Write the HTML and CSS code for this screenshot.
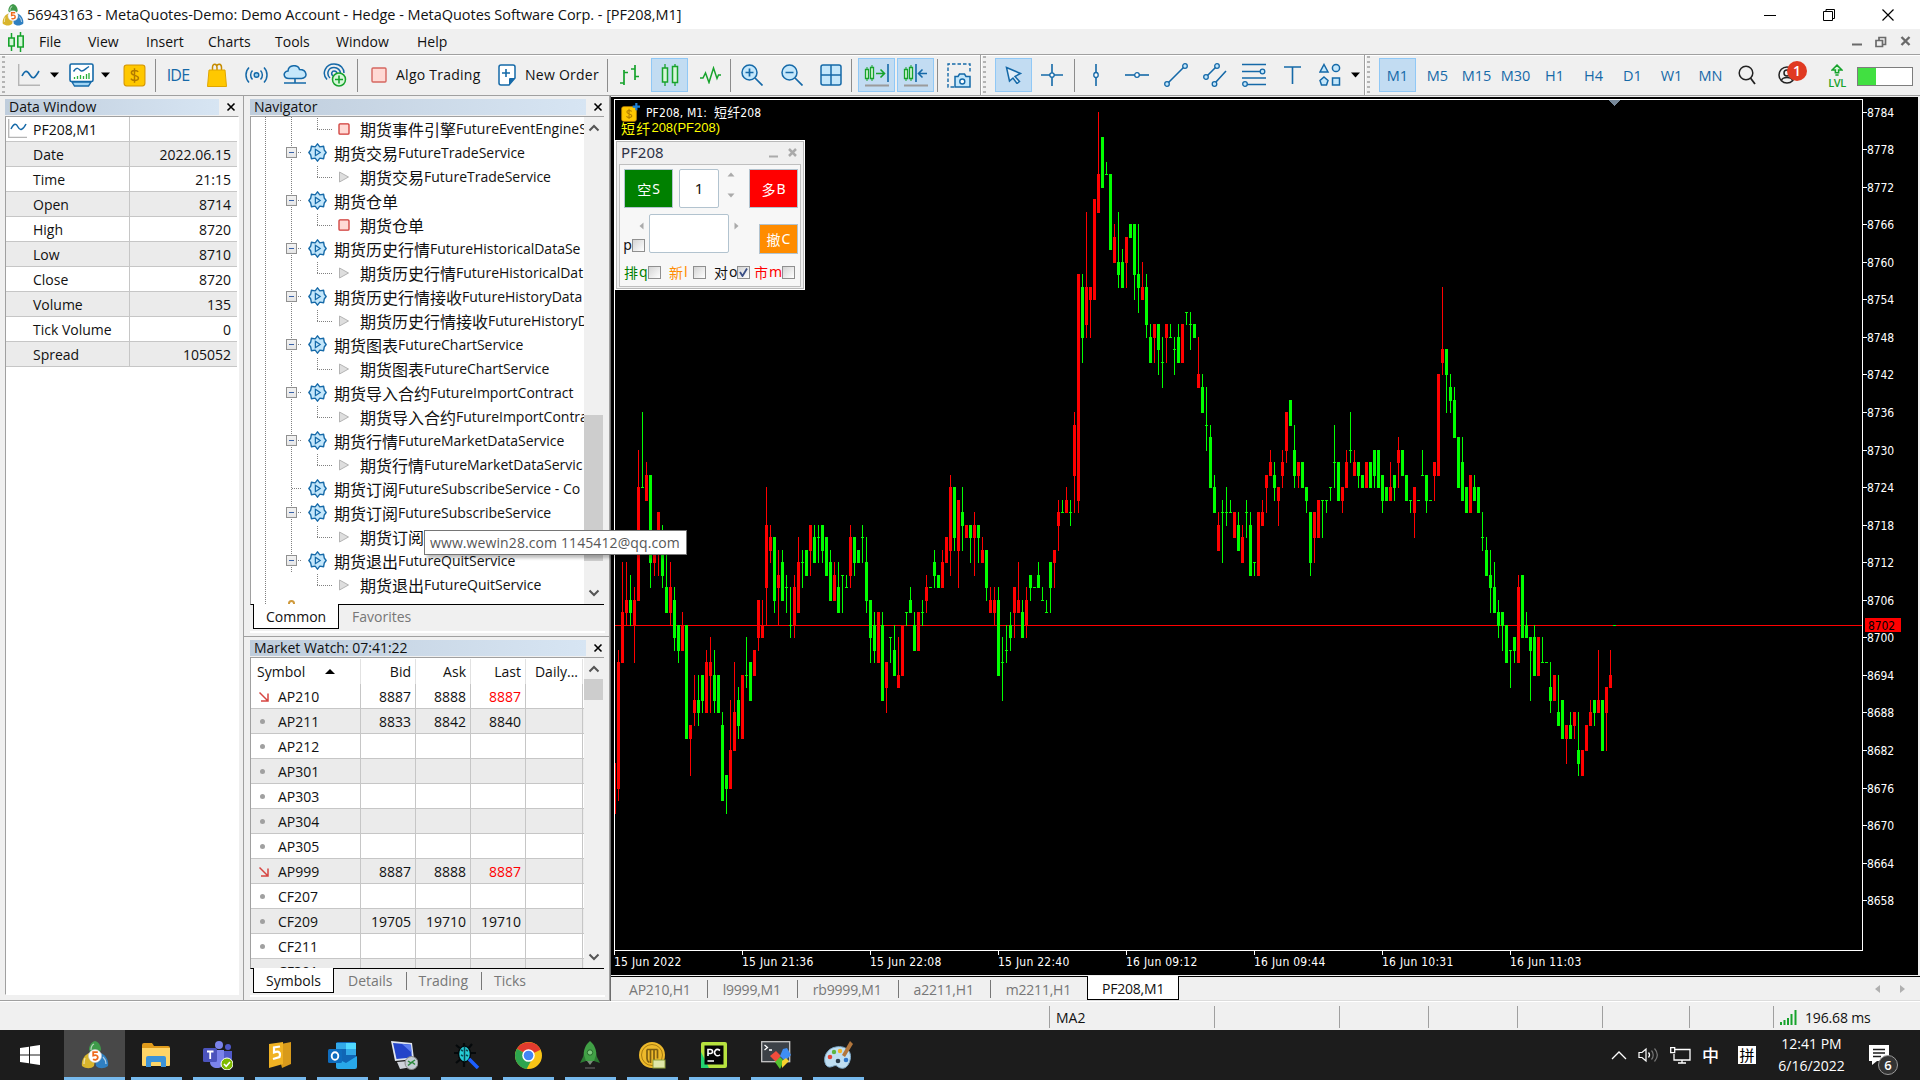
FILE: index.html
```html
<!DOCTYPE html>
<html lang="en">
<head>
    <meta charset="UTF-8">
    <meta name="viewport" content="width=device-width, initial-scale=1.0">
    <title>56943163 - MetaQuotes-Demo: Demo Account - Hedge</title>
    <link rel="stylesheet" href="styles.css">
</head>
<body>

    <!-- shared icons -->
    <svg width="0" height="0" class="defs">
        <symbol id="mt5" viewBox="0 0 28 28">
            <path d="M14 0c-4 1-6 5-6 9l3 4h6l3-4c0-4-2-8-6-9z" fill="#3f9a4a"/>
            <path d="M8 12c-5 2-8 8-7 13 4 3 9 3 12 0l1-7z" fill="#d9b52c"/>
            <path d="M20 12c5 2 8 8 7 13-4 3-9 3-12 0l-1-7z" fill="#2f7fc1"/>
            <path d="M13 3c-2 1-3 4-3 6M4 17c-1 2-1 4-1 6M22 16c2 2 3 5 3 7" stroke="#fff" stroke-opacity=".6" stroke-width="1.3" fill="none"/>
            <circle cx="14" cy="15" r="6.5" fill="#fff" stroke="#c9c9c9" stroke-width=".6"/>
            <path d="M16.800 11.200h-4.600v3.400c3-1 4.800 0 4.600 2.100s-2.800 2.600-4.800 1.500" stroke="#ee6a1c" stroke-width="1.800" fill="none"/>
        </symbol>
        <symbol id="gear" viewBox="0 0 18 18">
            <path d="M9 .8l2.200 2.900 3.600-.6.600 3.500L17.200 9l-1.800 2.400-.600 3.500-3.600-.6L9 17.200l-2.200-2.900-3.600.6-.6-3.500L.8 9l1.800-2.400.6-3.500 3.600.6z" fill="#c4e7fb" stroke="#1569a8" stroke-width="1.300" stroke-linejoin="round"/>
            <path d="M7 6l4.500 3L7 12z" fill="none" stroke="#1569a8" stroke-width="1.200"/>
        </symbol>
        <symbol id="play" viewBox="0 0 12 12"><path d="M1.500 1L10.500 6l-9 5z" fill="#dedede" stroke="#b4b4b4"/></symbol>
        <symbol id="stopped" viewBox="0 0 12 12"><rect x="1" y=".8" width="10" height="10.400" rx="1" fill="#ffd9d4" stroke="#cf3a36" stroke-width="1.300"/></symbol>
        <symbol id="down" viewBox="0 0 12 12"><path d="M1.500 1.500l8 8M10 2.500V10H3" fill="none" stroke="#d64541" stroke-width="1.500"/></symbol>
        <symbol id="close" viewBox="0 0 10 10"><path d="M1.500 1.500l7 7M8.500 1.500l-7 7" stroke="#000" stroke-width="1.600"/></symbol>
        <symbol id="chev" viewBox="0 0 12 8"><path d="M1.500 6.500L6 2l4.500 4.500" fill="none" stroke="#555" stroke-width="2"/></symbol>
        <symbol id="caret" viewBox="0 0 9 6"><path d="M0 0.500h9L4.500 5.500z"/></symbol>
        <symbol id="coin" viewBox="0 0 22 22">
            <rect x="1" y="1" width="20" height="20" rx="2.500" fill="#ffc800" stroke="#d39400"/>
            <path d="M14.500 7.500c-1-1.700-6.500-2-6.500.9 0 3.200 6.800 1.800 6.800 5.100 0 3-6 2.800-7.300.5M11 4v14" fill="none" stroke="#b17a00" stroke-width="1.400"/>
        </symbol>
    </svg>

    <div class="titlebar">
        <svg class="app-icon" width="22" height="22"><use href="#mt5"/></svg>
        <span class="title">56943163 - MetaQuotes-Demo: Demo Account - Hedge - MetaQuotes Software Corp. - [PF208,M1]</span>
        <div class="win-buttons">
            <svg width="12" height="12" viewBox="0 0 12 12"><path d="M0 6.500h12" stroke="#000"/></svg>
            <svg width="12" height="12" viewBox="0 0 12 12"><path d="M.5 2.500h9v9h-9zM3 2.500v-2h8.500v9H9.500" fill="none" stroke="#000"/></svg>
            <svg width="12" height="12" viewBox="0 0 12 12"><path d="M.5.5l11 11M11.500.5l-11 11" stroke="#000" stroke-width="1.200"/></svg>
        </div>
    </div>

    <div class="menubar">
        <svg class="menu-icon" width="18" height="20" viewBox="0 0 18 20"><path d="M4.500 1v18M13.500 0v20" stroke="#17a32c" stroke-width="1.500"/><path d="M1.800 6h5.400v8H1.800zM10.800 4h5.400v11h-5.400z" fill="#d6f7d9" stroke="#17a32c" stroke-width="1.600"/></svg>
        <span class="m-file">File</span>
        <span class="m-view">View</span>
        <span class="m-insert">Insert</span>
        <span class="m-charts">Charts</span>
        <span class="m-tools">Tools</span>
        <span class="m-window">Window</span>
        <span>Help</span>
        <div class="mdi-buttons">
            <svg width="10" height="10" viewBox="0 0 10 10"><path d="M0 8.500h10" stroke="#6a6a6a" stroke-width="2"/></svg>
            <svg width="12" height="12" viewBox="0 0 12 12"><path d="M1 4.500h6.500v6H1zM4 4V1.500h6.500v7H8" fill="none" stroke="#6a6a6a" stroke-width="1.700"/></svg>
            <svg width="11" height="10" viewBox="0 0 11 10"><path d="M1.500 1l8 8M9.500 1l-8 8" stroke="#6a6a6a" stroke-width="2.400"/></svg>
        </div>
    </div>

    <div class="toolbar">
        <div class="grip first"></div>
        <div class="tool w34"><svg width="22" height="22" viewBox="0 0 22 22"><path d="M.7 0v21.300H22" fill="none" stroke="#b5b5b5" stroke-width="1.400"/><path d="M4 12c3-6 5-6 8-1s5 3 9-4" fill="none" stroke="#1569a8" stroke-width="1.600"/></svg></div>
        <div class="tool w16"><svg width="9" height="6"><use href="#caret"/></svg></div>
        <div class="tool w38"><svg width="25" height="24" viewBox="0 0 25 24"><rect x="1" y="1" width="23" height="17.500" rx="1.500" fill="#fff" stroke="#1569a8" stroke-width="1.600"/><path d="M3 19l2.500 4h14L22 19z" fill="#9fd4f4" stroke="#1569a8" stroke-width="1.400"/><path d="M4.500 8.500c3-5 5-3 7-1s4-1 8.500-4" fill="none" stroke="#1569a8" stroke-width="1.500"/><path d="M5.500 16v-2M8.500 16v-3M11.500 16v-4M14.500 16v-3M17.500 16v-5M20 16v-6" stroke="#28b23b" stroke-width="1.300"/></svg></div>
        <div class="tool w16 pull"><svg width="9" height="6"><use href="#caret"/></svg></div>
        <div class="tool w42"><svg width="23" height="23"><use href="#coin"/></svg></div>
        <div class="sep"></div>
        <div class="tool w44 ide">IDE</div>
        <div class="tool w34"><svg width="20" height="24" viewBox="0 0 20 24"><path d="M5.500 9V4.500c0-4.500 4.500-4 4.500 0V9M9.500 4c1-4 5-3.500 5 .5V9" fill="none" stroke="#c58b00" stroke-width="1.500"/><path d="M2 7h16l1.500 16.500H.5z" fill="#ffc800" stroke="#e0a500"/></svg></div>
        <div class="tool w44"><svg width="23" height="18" viewBox="0 0 23 18"><circle cx="11.500" cy="9" r="2.300" fill="#9fd4f4" stroke="#1569a8" stroke-width="1.400"/><path d="M7.500 4.500c-2.500 2.500-2.500 6.500 0 9M15.500 4.500c2.500 2.500 2.500 6.500 0 9M4 1.500c-4 4-4 11 0 15M19 1.500c4 4 4 11 0 15" fill="none" stroke="#1569a8" stroke-width="1.500"/></svg></div>
        <div class="tool w34"><svg width="24" height="20" viewBox="0 0 24 20"><path d="M6 13.500c-6 0-6.500-7-1-7.500C5.500-.5 15-1 16.500 4.500c8 0 8.500 9 2 9z" fill="#c4e7fb" stroke="#1569a8" stroke-width="1.500"/><path d="M12 13.500V18M1 18h22" stroke="#1569a8" stroke-width="1.600"/></svg></div>
        <div class="tool w45"><svg width="24" height="24" viewBox="0 0 24 24"><path d="M4 16.500C-2 10 3 1 11 1c7 0 10 5 10 9M7 15c-4-4-2-10.500 4-10.500 4 0 6.500 3 6.500 6M10 13c-2.500-2-1-5 1-5s3 1 3 3" fill="none" stroke="#1569a8" stroke-width="1.500"/><circle cx="16" cy="16.500" r="6.500" fill="#d6f7d9" stroke="#17a32c" stroke-width="1.500"/><path d="M16 12.500v8M12 16.500h8" stroke="#17a32c" stroke-width="1.600"/></svg></div>
        <div class="sep"></div>
        <div class="tool w42"><svg width="16" height="16" viewBox="0 0 16 16"><rect x="1" y="1" width="14" height="14" rx="1" fill="#ffd9d4" stroke="#d5655f" stroke-width="1.400"/></svg></div>
        <div class="tool-text algo">Algo Trading</div>
        <div class="tool w38 order"><svg width="18" height="22" viewBox="0 0 18 22"><path d="M3 1h12q2 0 2 2v11l-6 7H3q-2 0-2-2V3q0-2 2-2z" fill="#fff" stroke="#1569a8" stroke-width="1.500"/><path d="M11 21v-6q0-1 1-1h5z" fill="#1569a8"/><path d="M8 5v8M4 9h8" stroke="#1569a8" stroke-width="1.600"/></svg></div>
        <div class="tool-text neworder">New Order</div>
        <div class="sep"></div>
        <div class="tool w43"><svg width="22" height="20" viewBox="0 0 22 20"><path d="M5 5v15M1 18h4M5 7.500h4M16 0v15M12 4h4M16 11.500h4" fill="none" stroke="#17a32c" stroke-width="1.700"/></svg></div>
        <div class="tool on"><svg width="18" height="22" viewBox="0 0 18 22"><path d="M4 0v22M14 0v22" stroke="#17a32c" stroke-width="1.300"/><path d="M1.500 4h5v14h-5zM11.500 2.500h5v16h-5z" fill="#d6f7d9" stroke="#17a32c" stroke-width="1.500"/></svg></div>
        <div class="tool w40"><svg width="22" height="18" viewBox="0 0 22 18"><path d="M1 12h3l2.500-5 3.500 9.500L14.500 2 18 12.500 19.500 9H22" fill="none" stroke="#17a32c" stroke-width="1.500"/></svg></div>
        <div class="sep"></div>
        <div class="tool w42"><svg width="22" height="22" viewBox="0 0 22 22"><circle cx="8.500" cy="8.500" r="7.500" fill="#c4e7fb" stroke="#1569a8" stroke-width="1.500"/><path d="M14 14l7.500 7.500M4.500 8.500h8M8.500 4.500v8" stroke="#1569a8" stroke-width="1.700"/></svg></div>
        <div class="tool w38"><svg width="22" height="22" viewBox="0 0 22 22"><circle cx="8.500" cy="8.500" r="7.500" fill="#c4e7fb" stroke="#1569a8" stroke-width="1.500"/><path d="M14 14l7.500 7.500M4.500 8.500h8" stroke="#1569a8" stroke-width="1.700"/></svg></div>
        <div class="tool w40"><svg width="22" height="22" viewBox="0 0 22 22"><rect x="1" y="1" width="20" height="20" rx="2" fill="#c4e7fb" stroke="#1569a8" stroke-width="1.500"/><path d="M11 1v20M1 11h20" stroke="#1569a8" stroke-width="1.500"/></svg></div>
        <div class="sep"></div>
        <div class="tool on shift"><svg width="26" height="24" viewBox="0 0 26 24"><path d="M3 4v14M8 2v16" stroke="#17a32c"/><path d="M1.500 6.500h3v9h-3zM6.500 4.500h3v11h-3z" fill="#d6f7d9" stroke="#17a32c" stroke-width="1.300"/><path d="M12 10.500h8M16.500 6.500l4 4-4 4" fill="none" stroke="#17a32c" stroke-width="1.600"/><path d="M24 1v18" stroke="#1569a8" stroke-width="1.600"/><path d="M1 22.500h24" stroke="#9b9b9b" stroke-width="2"/></svg></div>
        <div class="tool on"><svg width="26" height="24" viewBox="0 0 26 24"><path d="M3 4v14M8 2v16" stroke="#17a32c"/><path d="M1.500 6.500h3v9h-3zM6.500 4.500h3v11h-3z" fill="#d6f7d9" stroke="#17a32c" stroke-width="1.300"/><path d="M13 1v18M24 10.500h-8M19.500 6.500l-4 4 4 4" fill="none" stroke="#1569a8" stroke-width="1.600"/><path d="M1 22.500h24" stroke="#9b9b9b" stroke-width="2"/></svg></div>
        <div class="sep after-on"></div>
        <div class="tool w42"><svg width="24" height="25" viewBox="0 0 24 25"><path d="M7 24H1V1h22v9" fill="none" stroke="#1569a8" stroke-width="1.400" stroke-dasharray="3.500 2"/><path d="M8 13.500h3l1.500-2.500h5l1.500 2.500h4V24H8z" fill="#c4e7fb" stroke="#1569a8" stroke-width="1.500"/><circle cx="15.300" cy="18.500" r="2.500" fill="#fff" stroke="#1569a8" stroke-width="1.400"/></svg></div>
        <div class="edge"></div>
        <div class="grip"></div>
        <div class="tool on"><svg width="17" height="18" viewBox="0 0 17 18"><path d="M1.500 1.500l14 6-5.500 3 4.500 5-2.500 2-4-5.500L4.500 15z" fill="#fff" fill-opacity=".5" stroke="#1569a8" stroke-width="1.500"/></svg></div>
        <div class="tool w36"><svg width="22" height="22" viewBox="0 0 22 22"><path d="M11 0v22M0 11h22" stroke="#1569a8" stroke-width="1.600"/><circle cx="11" cy="11" r="2.200" fill="#fff" stroke="#1569a8" stroke-width="1.300"/></svg></div>
        <div class="sep after-cross"></div>
        <div class="tool w42"><svg width="8" height="22" viewBox="0 0 8 22"><path d="M4 0v22" stroke="#1569a8" stroke-width="1.600"/><ellipse cx="4" cy="11" rx="2.200" ry="2.500" fill="#fff" stroke="#1569a8" stroke-width="1.300"/></svg></div>
        <div class="tool"><svg width="24" height="8" viewBox="0 0 24 8"><path d="M0 4h24" stroke="#1569a8" stroke-width="1.600"/><circle cx="12" cy="4" r="2.300" fill="#fff" stroke="#1569a8" stroke-width="1.300"/></svg></div>
        <div class="tool"><svg width="24" height="24" viewBox="0 0 24 24"><path d="M4.500 19.500l15-15" stroke="#1569a8" stroke-width="1.600"/><circle cx="3" cy="21" r="2.300" fill="#c4e7fb" stroke="#1569a8" stroke-width="1.300"/><circle cx="21" cy="3" r="2.300" fill="#c4e7fb" stroke="#1569a8" stroke-width="1.300"/></svg></div>
        <div class="tool"><svg width="24" height="24" viewBox="0 0 24 24"><path d="M4.500 12.500l8-8M12.500 19.500L23 8" stroke="#1569a8" stroke-width="1.600"/><g fill="#c4e7fb" stroke="#1569a8" stroke-width="1.300"><circle cx="3" cy="14" r="2.300"/><circle cx="14" cy="3" r="2.300"/><circle cx="11.500" cy="21" r="2.300"/></g></svg></div>
        <div class="tool"><svg width="24" height="24" viewBox="0 0 24 24"><path d="M0 1.500h24M0 8.500h18M0 15h24M5 21.500h19" stroke="#1569a8" stroke-width="1.600"/><g fill="#c4e7fb" stroke="#1569a8" stroke-width="1.300"><circle cx="20.500" cy="8.500" r="2.300"/><circle cx="3" cy="21" r="2.300"/></g></svg></div>
        <div class="tool"><svg width="17" height="18" viewBox="0 0 17 18"><path d="M0 1h17M8.500 1v17" stroke="#1569a8" stroke-width="1.600"/></svg></div>
        <div class="tool w36"><svg width="22" height="24" viewBox="0 0 22 24"><g fill="#c4e7fb" stroke="#1569a8" stroke-width="1.500"><path d="M5 1.500l4 7.500H1z"/><circle cx="17" cy="5" r="3.600"/><path d="M5 14l4 3.500L7.500 22h-5L1 17.500z"/><rect x="13.500" y="15" width="7" height="7"/></g></svg></div>
        <div class="tool w14"><svg width="9" height="6"><use href="#caret"/></svg></div>
        <div class="edge second"></div>
        <div class="grip"></div>
        <div class="tool on tf">M1</div>
        <div class="tool tf">M5</div>
        <div class="tool tf">M15</div>
        <div class="tool tf">M30</div>
        <div class="tool tf">H1</div>
        <div class="tool tf">H4</div>
        <div class="tool tf">D1</div>
        <div class="tool tf">W1</div>
        <div class="tool tf">MN</div>
        <div class="tool w34"><svg width="18" height="20" viewBox="0 0 18 20"><circle cx="8" cy="8" r="6.800" fill="none" stroke="#222" stroke-width="1.500"/><path d="M12.500 13l4.500 6" stroke="#222" stroke-width="1.800"/></svg></div>
        <div class="tool w50 account"><svg width="18" height="20" viewBox="0 0 18 20"><circle cx="9" cy="10" r="8" fill="none" stroke="#222" stroke-width="1.500"/><circle cx="9" cy="8" r="3" fill="none" stroke="#222" stroke-width="1.500"/><path d="M3.500 15.500c1-4 10-4 11 0" fill="none" stroke="#222" stroke-width="1.500"/></svg><span class="badge">1</span></div>
        <div class="tool w46 lvl"><svg width="12" height="12" viewBox="0 0 11 11"><path d="M5.500 1L10 5.500H7V8H4V5.500H1zM4 10h3" fill="#d6f7d9" stroke="#17a32c" stroke-width="1.400"/></svg><span>LVL</span></div>
        <div class="traffic"><div class="traffic-fill"></div></div>
    </div>

    <div class="workspace">
        <div class="dock dock-left">
            <div class="caption"><div class="caption-text">Data Window</div><svg width="10" height="10"><use href="#close"/></svg></div>
            <div class="data-table">
                <div class="data-row head"><span><svg width="19" height="19" viewBox="0 0 19 19"><path d="M.7 0v18.300H19" fill="none" stroke="#b5b5b5" stroke-width="1.300"/><path d="M3 10c3-6 5-6 7-2s5 3 8-3" fill="none" stroke="#1569a8" stroke-width="1.500"/></svg>PF208,M1</span><b></b></div>
                <div class="data-row"><span>Date</span><b>2022.06.15</b></div>
                <div class="data-row"><span>Time</span><b>21:15</b></div>
                <div class="data-row"><span>Open</span><b>8714</b></div>
                <div class="data-row"><span>High</span><b>8720</b></div>
                <div class="data-row"><span>Low</span><b>8710</b></div>
                <div class="data-row"><span>Close</span><b>8720</b></div>
                <div class="data-row"><span>Volume</span><b>135</b></div>
                <div class="data-row"><span>Tick Volume</span><b>0</b></div>
                <div class="data-row"><span>Spread</span><b>105052</b></div>
            </div>
        </div>

        <div class="dock dock-mid">
            <div class="navigator">
                <div class="caption"><div class="caption-text">Navigator</div><svg width="10" height="10"><use href="#close"/></svg></div>
                <div class="scroll-area nav-area">
                    <ul class="tree">
                        <li class="leaf"><svg><use href="#stopped"/></svg><i>期货事件引擎</i>FutureEventEngineS</li>
                        <li class="node"><svg><use href="#gear"/></svg><i>期货交易</i>FutureTradeService</li>
                        <li class="leaf"><svg><use href="#play"/></svg><i>期货交易</i>FutureTradeService</li>
                        <li class="node"><svg><use href="#gear"/></svg><i>期货仓单</i></li>
                        <li class="leaf"><svg><use href="#stopped"/></svg><i>期货仓单</i></li>
                        <li class="node"><svg><use href="#gear"/></svg><i>期货历史行情</i>FutureHistoricalDataSe</li>
                        <li class="leaf"><svg><use href="#play"/></svg><i>期货历史行情</i>FutureHistoricalDat</li>
                        <li class="node"><svg><use href="#gear"/></svg><i>期货历史行情接收</i>FutureHistoryData</li>
                        <li class="leaf"><svg><use href="#play"/></svg><i>期货历史行情接收</i>FutureHistoryD</li>
                        <li class="node"><svg><use href="#gear"/></svg><i>期货图表</i>FutureChartService</li>
                        <li class="leaf"><svg><use href="#play"/></svg><i>期货图表</i>FutureChartService</li>
                        <li class="node"><svg><use href="#gear"/></svg><i>期货导入合约</i>FutureImportContract</li>
                        <li class="leaf"><svg><use href="#play"/></svg><i>期货导入合约</i>FutureImportContra</li>
                        <li class="node"><svg><use href="#gear"/></svg><i>期货行情</i>FutureMarketDataService</li>
                        <li class="leaf"><svg><use href="#play"/></svg><i>期货行情</i>FutureMarketDataServic</li>
                        <li class="node single"><svg><use href="#gear"/></svg><i>期货订阅</i>FutureSubscribeService - Co</li>
                        <li class="node"><svg><use href="#gear"/></svg><i>期货订阅</i>FutureSubscribeService</li>
                        <li class="leaf"><svg><use href="#play"/></svg><i>期货订阅</i></li>
                        <li class="node last"><svg><use href="#gear"/></svg><i>期货退出</i>FutureQuitService</li>
                        <li class="leaf last"><svg><use href="#play"/></svg><i>期货退出</i>FutureQuitService</li>
                        <li class="market"></li>
                    </ul>
                    <div class="scrollbar"><svg width="12" height="8"><use href="#chev"/></svg><div class="thumb nav-thumb"></div><svg class="flip" width="12" height="8"><use href="#chev"/></svg></div>
                </div>
                <div class="tabs"><span class="tab active">Common</span><span class="tab">Favorites</span></div>
            </div>

            <div class="market-watch">
                <div class="caption"><div class="caption-text">Market Watch: 07:41:22</div><svg width="10" height="10"><use href="#close"/></svg></div>
                <div class="scroll-area mw-area">
                    <div class="mw-table">
                        <div class="mw-row mw-head"><span>Symbol<svg width="10" height="5" viewBox="0 0 10 5"><path d="M0 5h10L5 0z"/></svg></span><span>Bid</span><span>Ask</span><span>Last</span><span>Daily...</span></div>
                        <div class="mw-row"><span><svg width="12" height="12"><use href="#down"/></svg>AP210</span><span>8887</span><span>8888</span><span class="red">8887</span><span></span></div>
                        <div class="mw-row"><span><em></em>AP211</span><span>8833</span><span>8842</span><span>8840</span><span></span></div>
                        <div class="mw-row"><span><em></em>AP212</span><span></span><span></span><span></span><span></span></div>
                        <div class="mw-row"><span><em></em>AP301</span><span></span><span></span><span></span><span></span></div>
                        <div class="mw-row"><span><em></em>AP303</span><span></span><span></span><span></span><span></span></div>
                        <div class="mw-row"><span><em></em>AP304</span><span></span><span></span><span></span><span></span></div>
                        <div class="mw-row"><span><em></em>AP305</span><span></span><span></span><span></span><span></span></div>
                        <div class="mw-row"><span><svg width="12" height="12"><use href="#down"/></svg>AP999</span><span>8887</span><span>8888</span><span class="red">8887</span><span></span></div>
                        <div class="mw-row"><span><em></em>CF207</span><span></span><span></span><span></span><span></span></div>
                        <div class="mw-row"><span><em></em>CF209</span><span>19705</span><span>19710</span><span>19710</span><span></span></div>
                        <div class="mw-row"><span><em></em>CF211</span><span></span><span></span><span></span><span></span></div>
                        <div class="mw-row"><span><em></em>CF301</span><span></span><span></span><span></span><span></span></div>
                    </div>
                    <div class="scrollbar"><svg width="12" height="8"><use href="#chev"/></svg><div class="thumb mw-thumb"></div><svg class="flip" width="12" height="8"><use href="#chev"/></svg></div>
                </div>
                <div class="tabs"><span class="tab active sym">Symbols</span><span class="tab">Details</span><span class="tab bar">Trading</span><span class="tab bar">Ticks</span></div>
            </div>
        </div>

        <div class="chart-side">
            <div class="chart-window">
                <svg id="chart" width="1306" height="877"></svg>
                <div class="chart-title"><svg width="19" height="19" viewBox="0 0 26 26"><svg y="4" width="22" height="22"><use href="#coin"/></svg><path d="M21 0v10M16 5h10" stroke="#1c7fd6" stroke-width="3"/></svg><span>PF208, M1:&nbsp; <i>短纤</i>208</span></div>
                <div class="chart-note"><i>短纤</i>208(PF208)</div>
                <div class="trade-panel">
                    <div class="tp-head"><span>PF208</span><svg width="30" height="12" viewBox="0 0 30 12"><path d="M2 9.500h9" stroke="#aaa" stroke-width="2"/><path d="M22 2l7 7M29 2l-7 7" stroke="#aaa" stroke-width="2.500"/></svg></div>
                    <div class="tp-body">
                        <div class="tp-row">
                            <div class="tp-btn sell"><i>空</i>S</div>
                            <div class="tp-input">1</div>
                            <div class="spin"><svg width="8" height="5" viewBox="0 0 8 5"><path d="M.5 4.500h7L4 .5z" fill="#aaa"/></svg><svg width="8" height="5" viewBox="0 0 8 5"><path d="M.5.5h7L4 4.500z" fill="#aaa"/></svg></div>
                            <div class="tp-btn buy"><i>多</i>B</div>
                        </div>
                        <div class="tp-row second">
                            <div class="tp-p"><svg width="5" height="8" viewBox="0 0 5 8"><path d="M4.500.5v7L.5 4z" fill="#aaa"/></svg><label>p<u></u></label></div>
                            <div class="tp-price"></div>
                            <svg class="tri-right" width="5" height="8" viewBox="0 0 5 8"><path d="M.5.5v7L4.500 4z" fill="#aaa"/></svg>
                            <div class="tp-btn cancel"><i>撤</i>C</div>
                        </div>
                        <div class="tp-checks">
                            <label class="c-green"><i>排</i>q<u></u></label>
                            <label class="c-orange"><i>新</i>l<u></u></label>
                            <label><i>对</i>o<u class="on-check"><svg width="9" height="9" viewBox="0 0 9 9"><path d="M1 4l2.500 4L8 .5" fill="none" stroke="#3a4f86" stroke-width="1.800"/></svg></u></label>
                            <label class="c-red"><i>市</i>m<u></u></label>
                        </div>
                    </div>
                </div>
            </div>
            <div class="chart-tabs">
                <span class="ct">AP210,H1</span><span class="ct bar">l9999,M1</span><span class="ct bar">rb9999,M1</span><span class="ct bar">a2211,H1</span><span class="ct bar">m2211,H1</span><span class="ct active">PF208,M1</span>
                <div class="ct-arrows"><svg width="5" height="8" viewBox="0 0 5 8"><path d="M5 0v8L0 4z" fill="#b0b0b0"/></svg><svg width="5" height="8" viewBox="0 0 5 8"><path d="M0 0v8L5 4z" fill="#b0b0b0"/></svg></div>
            </div>
        </div>
    </div>

    <div class="statusbar">
        <div class="st-blank"></div>
        <div class="st s165">MA2</div>
        <div class="st s125"></div>
        <div class="st s89"></div>
        <div class="st s89"></div>
        <div class="st s85"></div>
        <div class="st s87"></div>
        <div class="st s84"></div>
        <div class="st ping"><svg width="18" height="15" viewBox="0 0 18 15"><path d="M1 15v-3M4.500 15v-5M8 15V8M11.500 15V4M15.500 15V0" stroke="#17a32c" stroke-width="2"/></svg>196.68 ms</div>
    </div>

    <div class="taskbar">
        <div class="task start"><svg width="20" height="20" viewBox="0 0 20 20"><path d="M0 3l9-1.300V9.500H0zM10 1.500L20 0v9.500H10zM0 10.500h9v7.800L0 17zM10 10.500h10V20l-10-1.500z" fill="#fff"/></svg></div>
        <div class="task current"><svg width="28" height="28"><use href="#mt5"/></svg></div>
        <div class="task folder"><svg width="28" height="24" viewBox="0 0 28 24"><path d="M0 2q0-2 2-2h8l2 3h14q2 0 2 2v3H0z" fill="#e09b1b"/><path d="M0 5h28v17q0 1-1 1H1q-1 0-1-1z" fill="#ffd567"/><path d="M4 24v-9q0-2 2-2h16q2 0 2 2v9h-5v-4q0-1-1-1h-8q-1 0-1 1v4z" fill="#3d93d8"/></svg></div>
        <div class="task"><svg width="30" height="29" viewBox="0 0 30 29"><circle cx="16" cy="4" r="4" fill="#7b83eb"/><circle cx="25" cy="6" r="3" fill="#5059c9"/><path d="M20 10h9v8q-1 6-6 6h-3z" fill="#5059c9"/><path d="M7 9h14v12c0 8-14 8-14 0z" fill="#7b83eb"/><rect y="7" width="14" height="14" rx="1.500" fill="#4b53bc"/><path d="M4 10.500h6.500M7.200 10.500V18" stroke="#fff" stroke-width="1.800"/><circle cx="24" cy="23" r="6" fill="#7fba00" stroke="#fff"/><path d="M21 23l2.200 2.300L27 21" stroke="#fff" stroke-width="1.600" fill="none"/></svg></div>
        <div class="task"><svg width="24" height="28" viewBox="0 0 24 28"><path d="M8 4l15-3v22l-9 4z" fill="#d89a1b"/><path d="M1 3l14-2v22L1 27z" fill="#f0b223"/><path d="M12 5.500l-6 1v5c5-2 7 0 5.500 4.500L5 18" stroke="#fff" stroke-width="2.200" fill="none"/></svg></div>
        <div class="task"><svg width="29" height="27" viewBox="0 0 29 27"><rect x="8" width="20" height="26" rx="1.500" fill="#1066b5"/><path d="M8 1h10v6H8zM18 7h10v6H18z" fill="#32a9e8"/><path d="M18 1h10v6H18z" fill="#50d9ff"/><path d="M8 16l10 5 11-7v11q0 2-2 2H10q-2 0-2-2z" fill="#28a8ea"/><rect y="7" width="14" height="14" rx="1.500" fill="#0f6cbd"/><ellipse cx="7" cy="14" rx="3.300" ry="3.800" stroke="#fff" stroke-width="1.900" fill="none"/></svg></div>
        <div class="task"><svg width="28" height="30" viewBox="0 0 28 30"><path d="M1 1l21 2 2 16-19 2z" fill="#dfe5ee"/><path d="M3 3l17.500 1.500 1.500 13L6.500 19z" fill="#2344c9"/><path d="M12 4l9 .7.800 8z" fill="#5b7df0"/><path d="M7 22l12-1 3 6-12 2z" fill="#cfd3da"/><circle cx="21.500" cy="23" r="6.500" fill="#c3ccd3" stroke="#888"/><path d="M18 21l3 2-3 2.500M25 20l-3 2 3 2.500" fill="none" stroke="#2c8a3c" stroke-width="1.500"/></svg></div>
        <div class="task"><svg width="28" height="28" viewBox="0 0 28 28"><path d="M4 4l6 5M20 3l-5 6M2 12h7M24 12h-7M4 22l6-5M12 2v24" stroke="#05090b" stroke-width="2.200"/><ellipse cx="12.500" cy="13" rx="6" ry="8" fill="#27cdd6" stroke="#05090b" stroke-width="1.500"/><path d="M12.500 6v14M9 9l2 1M14 9l2 1M9 14l2 1M14 14l2 1" stroke="#0b4a55" stroke-width="1.500"/><path d="M17 18l9 9" stroke="#1c5fff" stroke-width="3.500"/></svg></div>
        <div class="task"><svg width="27" height="27" viewBox="0 0 28 28"><circle cx="14" cy="14" r="14" fill="#f9c416"/><path d="M14 14L2 7A14 14 0 0 1 26.500 8z" fill="#e33b2e"/><path d="M14 14L2 7a14 14 0 0 0 10 21l6-11z" fill="#2da44e"/><circle cx="14" cy="14" r="6.500" fill="#fff"/><circle cx="14" cy="14" r="5" fill="#4285f4"/></svg></div>
        <div class="task"><svg width="22" height="28" viewBox="0 0 22 28"><path d="M11 0c6 5 7.500 12 5.500 20h-11C3.500 12 5 5 11 0z" fill="#41a046"/><path d="M5 14l-4 8 6-2zM17 14l4 8-6-2z" fill="#2c7a33"/><path d="M8 20h6l-3 4z" fill="#7a8f7c"/><circle cx="11" cy="11.500" r="2.700" fill="#7ec87f" stroke="#25682a"/><path d="M6 27h10" stroke="#444" stroke-width="2"/></svg></div>
        <div class="task"><svg width="27" height="28" viewBox="0 0 27 28"><circle cx="13" cy="14" r="13" fill="#edb92b"/><circle cx="13" cy="14" r="10.500" fill="none" stroke="#a87c10"/><path d="M8 8.500v9q0 2 2 4M11.500 8v14M15 8v14M18.500 8.500v9M8 8.500h10.500" fill="none" stroke="#7d5f12" stroke-width="1.700"/><rect x="14" y="19" width="12" height="8" fill="#dfe6a8" stroke="#8fa03a"/></svg></div>
        <div class="task"><svg width="26" height="26" viewBox="0 0 26 26"><rect width="26" height="26" rx="2" fill="#b7e23f"/><path d="M0 10l8 16H0z" fill="#22d36f"/><rect x="3.500" y="3.500" width="19" height="19" fill="#050505"/><path d="M7 14V7.500h2.500q2 0 2 2t-2 2H7M19 8.500c-4-3-7 1.500-4.500 4.300 1.500 1.500 3.500 1 4.500 0M6.500 19h6.500" fill="none" stroke="#fff" stroke-width="1.600"/></svg></div>
        <div class="task"><svg width="31" height="28" viewBox="0 0 31 28"><rect x=".7" y=".7" width="28" height="20" fill="#3c4147" stroke="#c6c6c6" stroke-width="1.300"/><path d="M3.500 4l3 2.500-3 2.500M8 9h3" fill="none" stroke="#fff" stroke-width="1.300"/><path d="M9 15l6-5 5 5-5 6z" fill="#f14c3c"/><path d="M22 8l4-1 4 7-6 6-5-5z" fill="#3f8ef5"/><path d="M14 21l5-5 4 4-4 8z" fill="#54c12e"/><path d="M21 20l4-3 3 3-7 7z" fill="#f7d22d"/></svg></div>
        <div class="task"><svg width="29" height="29" viewBox="0 0 29 29"><path d="M12 6C3 7-2 17 2 24c4 5 8-1 11 1 3 3 9 4 12-3C30 11 22 4 12 6z" fill="#bfdff2" stroke="#7fa9c7"/><path d="M18 14L26 0l3 3-8 13z" fill="#b2763c"/><circle cx="6" cy="16" r="2.300" fill="#e2483b"/><circle cx="10" cy="11" r="2.200" fill="#5cb53f"/><circle cx="16" cy="10" r="2.200" fill="#f0b52b"/><circle cx="22" cy="19" r="2.300" fill="#2d76c9"/><circle cx="14" cy="20" r="2.300" fill="#2a3a48"/></svg></div>
        <div class="tray">
            <svg width="16" height="9" viewBox="0 0 16 9"><path d="M1 8l7-7 7 7" fill="none" stroke="#fff" stroke-width="1.300"/></svg>
            <svg width="21" height="16" viewBox="0 0 21 16"><path d="M1 5.500h3L8 2v12l-4-3.500H1z" fill="none" stroke="#fff" stroke-width="1.200"/><path d="M10.500 5.500c1.300 1.500 1.300 3.500 0 5" fill="none" stroke="#fff" stroke-width="1.200"/><path d="M13.500 3.500c2.300 2.500 2.300 6.500 0 9M16.500 1.500c3.500 4 3.500 9 0 13" fill="none" stroke="#777" stroke-width="1.200"/></svg>
            <svg width="21" height="17" viewBox="0 0 21 17"><path d="M5 2.500h15v10.500H4V7M12 13v3M8 16h8" fill="none" stroke="#fff" stroke-width="1.300"/><path d="M.7.700h4v5h-4z" fill="#1c1c1c" stroke="#fff" stroke-width="1.300"/></svg>
            <span class="ime">中</span>
            <span class="pinyin">拼</span>
            <div class="clock"><div>12:41 PM</div><div>6/16/2022</div></div>
            <div class="notify"><svg width="20" height="20" viewBox="0 0 20 20"><path d="M0 0h20v16H8l-5 4v-4H0z" fill="#fff"/><path d="M4 4.500h12M4 8h12M4 11.500h8" stroke="#1c1c1c" stroke-width="1.300"/></svg><span>6</span></div>
        </div>
    </div>

    <div class="tooltip">www.wewin28.com 1145412@qq.com</div>

    <script src="chart.js"></script>
</body>
</html>
```
FILE: chart.js
```js
// M1 bars of PF208 as [open, high, low, close], in ticks of 2 points from 8702
const bars = [
    [-15,-11,-15,-11],[-13,-2,-14,-3],[-3,5,-3,1],[1,5,0,2],[2,4,0,1],[0,3,-3,2],[2,14,2,11],[11,17,11,11],[10,13,10,12],[12,12,3,5],
    [5,7,4,7],[7,9,4,9],[7,8,3,4],[3,6,1,1],[1,5,0,3],[2,3,-2,-1],[0,0,-3,-2],[-2,1,-2,0],[0,0,-9,-9],[-9,-8,-12,-8],
    [-7,-4,-8,-6],[-6,-4,-8,-7],[-4,-4,-7,-6],[-7,-2,-7,-3],[-4,-1,-7,-3],[-4,-2,-7,-6],[-4,-4,-7,-7],[-8,-7,-14,-14],[-12,-12,-15,-13],[-13,-6,-13,-10],
    [-10,-3,-10,-7],[-6,-5,-9,-8],[-9,-4,-9,-4],[-4,-1,-5,-4],[-3,-3,-6,-6],[-4,-2,-4,-2],[-1,2,-2,2],[-1,2,-1,0],[3,11,0,8],[6,8,5,7],
    [7,7,1,2],[3,6,0,4],[5,6,2,2],[3,4,1,3],[0,3,-1,0],[0,4,-1,3],[1,7,1,5],[5,6,3,5],[6,6,4,4],[6,8,4,8],
    [7,8,5,5],[7,8,5,7],[8,8,5,6],[7,7,4,4],[5,6,2,2],[2,5,2,4],[3,5,1,1],[4,4,1,4],[3,4,3,3],[4,8,3,7],
    [7,7,4,5],[6,6,5,5],[7,8,5,7],[5,7,1,2],[2,2,-3,-1],[0,1,-3,-2],[-3,1,-3,1],[0,1,-6,-6],[-5,-3,-7,-3],[-1,-1,-3,-1],
    [-2,0,-4,-4],[-5,-1,-5,-4],[-4,0,-4,0],[1,1,0,1],[2,3,1,1],[0,1,-2,-2],[-2,1,-2,1],[1,2,0,1],[2,4,1,3],[3,3,3,3],
    [5,6,3,4],[4,4,3,3],[3,6,3,5],[5,7,5,7],[6,12,4,11],[11,11,6,7],[6,10,3,10],[9,11,6,8],[7,8,7,8],[8,8,5,7],
    [7,9,4,8],[8,8,5,7],[5,7,5,6],[6,6,2,3],[1,3,1,2],[1,3,0,2],[2,3,-4,-4],[-3,-1,-6,-3],[-2,0,-3,-2],[0,1,-2,-1],
    [1,3,-1,3],[1,5,1,2],[1,2,-1,-1],[0,3,-1,2],[4,4,2,3],[3,3,3,3],[4,5,3,3],[2,3,2,2],[1,2,1,1],[5,5,1,3],
    [5,6,3,6],[8,10,6,9],[9,10,9,9],[9,11,9,10],[9,10,8,9],[12,17,9,16],[10,28,9,28],[27,28,21,23],[24,33,23,27],[26,27,23,27],
    [26,34,26,34],[33,41,33,36],[39,39,35,35],[36,37,36,36],[36,36,30,30],[29,32,29,31],[29,33,27,28],[29,30,27,27],[29,31,27,31],[32,32,31,31],
    [32,32,26,28],[28,32,25,27],[26,29,26,27],[27,28,23,24],[23,24,21,21],[23,24,21,24],[24,24,20,22],[21,23,19,21],[23,24,21,24],[23,24,23,23],
    [22,23,20,22],[23,24,21,21],[21,24,21,24],[25,25,24,25],[24,25,22,24],[24,24,23,23],[19,23,19,20],[19,20,17,17],[16,19,14,16],[15,16,11,11],
    [11,12,9,9],[6,9,6,8],[9,10,5,9],[9,11,8,9],[9,10,9,9],[7,9,7,9],[8,9,6,6],[5,8,5,7],[9,10,7,9],[8,9,4,4],
    [5,5,4,5],[4,9,4,9],[8,10,8,9],[11,12,9,12],[12,14,12,13],[12,13,10,11],[10,11,8,11],[12,14,11,13],[14,17,13,17],[18,18,16,16],
    [14,16,11,12],[12,13,11,13],[13,13,11,11],[11,11,9,10],[9,9,4,5],[7,9,5,9],[7,10,7,10],[10,10,7,10],[10,10,9,10],[11,11,10,11],
    [13,16,11,13],[13,13,10,10],[10,11,9,11],[11,14,11,13],[14,17,13,14],[12,14,12,13],[13,13,11,12],[12,12,11,11],[11,13,11,13],[13,13,11,11],
    [14,14,11,12],[14,14,11,11],[12,12,9,10],[11,11,10,10],[10,13,10,11],[12,12,10,11],[13,15,11,14],[14,14,12,12],[12,12,10,10],[10,10,9,10],
    [9,11,7,11],[10,10,10,10],[12,14,12,12],[12,12,9,10],[10,10,10,10],[12,13,10,13],[12,20,12,20],[21,27,20,22],[22,22,17,20],[19,20,17,18],
    [18,19,15,15],[15,15,11,11],[13,15,10,10],[11,11,9,9],[9,12,9,12],[11,12,10,10],[11,11,9,9],[7,9,6,7],[6,7,4,4],[4,6,1,3],
    [3,5,1,1],[1,2,-1,0],[1,1,-2,0],[0,0,-3,-3],[-2,-2,-5,-2],[-1,-1,-3,-2],[-3,4,-3,3],[4,4,-1,-1],[0,1,-1,-1],[-1,-1,-6,-2],
    [-1,0,-4,-4],[-4,-1,-4,-1],[-3,-1,-3,-3],[-3,-3,-3,-3],[-5,-3,-7,-6],[-6,-4,-6,-4],[-7,-4,-8,-8],[-6,-6,-9,-9],[-9,-8,-11,-8],[-8,-7,-9,-9],
    [-8,-7,-9,-7],[-10,-7,-12,-11],[-12,-10,-12,-10],[-10,-8,-10,-8],[-8,-6,-8,-7],[-6,-6,-8,-7],[-7,-2,-7,-6],[-6,-6,-10,-10],[-7,-5,-10,-5],[-5,-2,-5,-4],
    [0,0,0,0]
];

const chart = document.getElementById("chart");
const left = 3, right = 1251, top0 = 1, bottom = 852;

function priceY(price) {
    return Math.round(13.6 + (8784 - price) * 6.259);
}

function tickY(ticks) {
    return priceY(8702 + ticks * 2);
}

function rect(x, y, w, h, fill) {
    return `<rect x="${x}" y="${y}" width="${w}" height="${h}" fill="${fill}"/>`;
}

let out = "";

// last price line
out += rect(left + 1, tickY(0), right - left, 1, "#f00");

bars.forEach((bar, i) => {
    const [o, h, l, c] = bar;
    const x = left + i * 4;
    const color = c > o ? "#f00" : "#0f0";
    const bodyTop = tickY(Math.max(o, c));
    const bodyBottom = tickY(Math.min(o, c));
    out += rect(x, tickY(h), 1, tickY(l) - tickY(h) + 1, color);
    out += rect(x - 1, bodyTop, 3, bodyBottom - bodyTop + 1, color);
});

// frame, painted after the bars so the first one is cut by the left edge
out += rect(0, 0, left, 877, "#000");
out += rect(left, top0, 1, bottom - top0 + 4, "#fff");
out += rect(left, top0, right - left, 1, "#fff");
out += rect(right, top0, 1, bottom - top0 + 1, "#fff");
out += rect(left, bottom, right - left, 1, "#fff");
out += `<path d="M998 2h11l-5.500 6z" fill="#778899"/>`;

// price scale
for (let p = 8784; p >= 8658; p -= 6) {
    out += rect(right, priceY(p), 5, 1, "#fff");
    out += `<text x="${right + 5}" y="${priceY(p) + 5}">${p}</text>`;
}
out += rect(1254, tickY(0) - 7, 36, 14, "#f00");
out += `<text class="last-price" x="1257" y="${tickY(0) + 5}">8702</text>`;

// time scale
const times = ["15 Jun 2022", "15 Jun 21:36", "15 Jun 22:08", "15 Jun 22:40", "16 Jun 09:12", "16 Jun 09:44", "16 Jun 10:31", "16 Jun 11:03"];
times.forEach((t, i) => {
    out += rect(left + i * 128, bottom, 1, 5, "#fff");
    out += `<text class="time" x="${left + i * 128}" y="868">${t}</text>`;
});

chart.innerHTML = out;
```
FILE: styles.css
```css
* {
    box-sizing: border-box;
}

body {
    margin: 0;
    width: 1920px;
    height: 1080px;
    overflow: hidden;
    background: #f0f0f0;
    color: #111;
    font-family: "Open Sans", "Noto Sans CJK SC", sans-serif;
    font-size: 14px;
    line-height: 20px;
    white-space: nowrap;
}

svg {
    display: block;
    flex: none;
}

i {
    font-style: normal;
    font-family: "Noto Sans CJK SC", sans-serif;
    font-size: 16px;
}

.defs {
    position: absolute;
}

/* title and menu */
.titlebar {
    display: flex;
    align-items: center;
    height: 29px;
    background: #fff;
    padding-left: 2px;
}

.title {
    margin-left: 3px;
    font-size: 14.500px;
    letter-spacing: -0.040px;
}

.win-buttons {
    display: flex;
    gap: 47px;
    margin-left: auto;
    padding-right: 26px;
}

.menubar {
    display: flex;
    align-items: center;
    height: 25px;
    padding-left: 7px;
}

.menubar span {
    width: 64px;
}

.menubar .menu-icon {
    margin-right: 14px;
}

.menubar .m-file { width: 49px; }
.menubar .m-view { width: 58px; }
.menubar .m-insert { width: 62px; }
.menubar .m-charts { width: 67px; }
.menubar .m-tools { width: 61px; }
.menubar .m-window { width: 81px; }

.mdi-buttons {
    display: flex;
    gap: 13px;
    margin-left: auto;
    padding-right: 9px;
}

/* toolbar */
.toolbar {
    display: flex;
    align-items: center;
    height: 42px;
    border-top: 1px solid #a0a0a0;
    border-bottom: 1px solid #a0a0a0;
    box-shadow: inset 0 1px #fff;
}

.tool {
    display: flex;
    align-items: center;
    justify-content: center;
    flex: none;
    width: 39px;
    height: 34px;
}

.tool.on {
    width: 37px;
    background: #c2dcf2;
    border: 1px solid #90c8f6;
    margin-right: 2px;
}

.tool.shift {
    margin-left: 6px;
}

.w14 { width: 14px; }
.w16 { width: 16px; }
.w34 { width: 34px; }
.w36 { width: 36px; }
.w38 { width: 38px; }
.w40 { width: 40px; }
.w42 { width: 42px; }
.w43 { width: 43px; }
.w44 { width: 44px; }
.w45 { width: 45px; }
.w46 { width: 46px; }
.w50 { width: 50px; }

.pull {
    margin-left: -3px;
}

.sep {
    flex: none;
    width: 1px;
    height: 33px;
    background: #8c8c8c;
}

.sep.after-on {
    margin-left: 1px;
}

.sep.after-cross {
    margin-left: 4px;
}

.edge {
    flex: none;
    width: 2px;
    height: 40px;
    background: linear-gradient(90deg, #a0a0a0 50%, #fff 50%);
}

.edge.second {
    margin-left: 2px;
}

.grip {
    flex: none;
    width: 3px;
    height: 38px;
    margin: 0 9px 0 1px;
    background: repeating-linear-gradient(#b4b4b4 0 2px, #f0f0f0 2px 5px);
}

.grip.first {
    margin: 0 7px 0 2px;
}

.ide,
.tf {
    color: #1569a8;
    font-size: 14.500px;
}

.tf {
    padding-top: 2px;
}

.ide {
    font-size: 16px;
    letter-spacing: -0.800px;
}

.tool-text {
    letter-spacing: 0.250px;
}

.algo {
    width: 92px;
    margin-left: -4px;
}

.neworder {
    width: 82px;
    margin-left: -1px;
}

.account {
    position: relative;
    padding-right: 5px;
}

.badge {
    position: absolute;
    left: 23px;
    top: 3px;
    width: 20px;
    height: 20px;
    border-radius: 50%;
    background: #e03a22;
    color: #fff;
    text-align: center;
    font-weight: 600;
}

.lvl {
    flex-direction: column;
    padding-top: 2px;
    color: #17a32c;
    font-size: 11px;
    font-weight: 600;
    line-height: 13px;
    letter-spacing: -0.500px;
}

.traffic {
    width: 56px;
    height: 19px;
    margin-left: -3px;
    margin-top: 2px;
    border: 1px solid #7d7d7d;
    background: #fff;
}

.traffic-fill {
    width: 18px;
    height: 17px;
    background: #41e041;
}

/* docked panels */
.workspace {
    display: grid;
    grid-template-columns: 244px 366px 1310px;
    height: 905px;
}

.dock {
    border-right: 1px solid #a0a0a0;
    border-bottom: 1px solid #a0a0a0;
}

.dock-left {
    padding: 3px 4px 4px 5px;
}

.caption {
    display: flex;
    align-items: center;
    height: 17px;
    padding-bottom: 1px;
}

.caption-text {
    height: 16px;
    padding-left: 4px;
    line-height: 16px;
    background: linear-gradient(90deg, #bfcddc, #d7e5f3);
}

.dock-left .caption-text { width: 214px; }
.dock-mid .caption-text { width: 336px; }

.caption svg {
    margin-left: 7px;
}

.data-table {
    height: 879px;
    border: 1px solid #a0a0a0;
    border-right-color: #fff;
    border-bottom-color: #fff;
    background: #fff;
}

.data-row {
    display: flex;
    height: 25px;
    line-height: 25px;
    margin-right: 1px;
    border-bottom: 1px solid #c6c6c6;
}

.data-row:nth-child(even),
.mw-row:nth-child(odd) {
    background: #ebebeb;
}

.data-row span {
    width: 124px;
    padding-left: 27px;
    border-right: 1px solid #c6c6c6;
}

.data-row.head span {
    display: flex;
    gap: 6px;
    padding: 2px 0 0 2px;
    line-height: 21px;
}

.data-row b {
    flex: 1;
    padding-right: 6px;
    text-align: right;
    font-weight: normal;
}

.dock-mid {
    padding: 3px 4px 0 6px;
}

.navigator {
    height: 537px;
}

.market-watch {
    height: 360px;
    margin: 0 -4px 0 -6px;
    padding: 3px 4px 0 6px;
    border-top: 1px solid #a0a0a0;
}

.scroll-area {
    display: flex;
    width: 354px;
    overflow: hidden;
    border-top: 1px solid #a0a0a0;
    border-left: 1px solid #a0a0a0;
    border-bottom: 1px solid #000;
    background: #fff;
}

.nav-area { height: 489px; }
.mw-area { height: 312px; }

.tree {
    width: 333px;
    margin: 0;
    padding: 0;
    overflow: hidden;
    list-style: none;
    background: repeating-linear-gradient(#808080 0 1px, transparent 1px 2px) 14px 0 / 1px 100% no-repeat;
}

.tree li {
    display: flex;
    align-items: center;
    height: 24px;
    padding-bottom: 1px;
    background: repeating-linear-gradient(#808080 0 1px, transparent 1px 2px) 40px 0 / 1px 100% no-repeat;
}

.tree i {
    line-height: 20px;
}

.tree .node svg {
    width: 19px;
    height: 19px;
    margin: 0 7px 0 6px;
}

.tree .leaf svg {
    width: 12px;
    height: 12px;
    margin: 0 10px 0 6px;
}

.tree .node::before,
.tree .leaf::before {
    content: "";
    flex: none;
}

/* collapse box and the dots that lead to the icon */
.node::before {
    width: 16px;
    height: 11px;
    margin-left: 35px;
    background:
        linear-gradient(#3a62a8, #3a62a8) 3px 5px / 5px 1px no-repeat,
        linear-gradient(#919191, #919191) 0 0 / 11px 1px no-repeat,
        linear-gradient(#919191, #919191) 0 10px / 11px 1px no-repeat,
        linear-gradient(#919191, #919191) 0 0 / 1px 11px no-repeat,
        linear-gradient(#919191, #919191) 10px 0 / 1px 11px no-repeat,
        linear-gradient(#f4f4f4, #e4e4e4) 0 0 / 11px 11px no-repeat,
        repeating-linear-gradient(90deg, #808080 0 1px, transparent 1px 2px) 12px 5px / 5px 1px no-repeat;
}

.node.single::before {
    background: repeating-linear-gradient(90deg, #808080 0 1px, transparent 1px 2px) 6px 5px / 12px 1px no-repeat;
}

.leaf::before {
    width: 15px;
    height: 12px;
    margin: -10px 0 0 66px;
    background:
        repeating-linear-gradient(#808080 0 1px, transparent 1px 2px) 0 0 / 1px 12px no-repeat,
        repeating-linear-gradient(90deg, #808080 0 1px, transparent 1px 2px) 0 11px / 15px 1px no-repeat;
}

.tree .leaf.last {
    background: none;
}

.tree .market {
    width: 7px;
    height: 7px;
    margin: 3px 0 0 37px;
    border: 2px solid #cf9a3c;
    border-radius: 50%;
    background: none;
}

.scrollbar {
    display: flex;
    flex-direction: column;
    align-items: center;
    width: 20px;
    padding: 7px 1px 7px 0;
    background: #f0f0f0;
}

.scrollbar .flip {
    margin-top: auto;
    transform: rotate(180deg);
}

.thumb {
    width: 19px;
    background: #cdcdcd;
}

.nav-thumb {
    height: 146px;
    margin-top: 283px;
}

.mw-thumb {
    height: 21px;
    margin-top: 6px;
}

.tabs {
    display: flex;
    height: 28px;
    padding-left: 3px;
    width: 355px;
    border-bottom: 2px solid #fff;
}

.tab {
    position: relative;
    height: 24px;
    padding: 0 13px;
    line-height: 24px;
    color: #777;
}

.tab.active {
    height: 25px;
    margin-top: -1px;
    width: 86px;
    background: #fff;
    border: 1px solid #000;
    border-top: 0;
    color: #111;
    padding-left: 12px;
    line-height: 25px;
}

.tab.active.sym {
    width: 81px;
    margin-right: 1px;
}

.tab.bar,
.ct.bar {
    background: linear-gradient(#777, #777) 0 3px / 1px 18px no-repeat;
}

/* market watch */
.mw-table {
    width: 333px;
}

.mw-row {
    display: grid;
    grid-template-columns: 110px 55px 55px 55px 57px;
    height: 25px;
    line-height: 25px;
    border-bottom: 1px solid #c6c6c6;
}

.mw-row span {
    padding-right: 4px;
    text-align: right;
    border-right: 1px solid #c6c6c6;
}

.mw-row span:first-child {
    display: flex;
    align-items: center;
    padding-left: 7px;
}

.mw-row svg {
    margin-right: 8px;
}

.mw-row em {
    width: 5px;
    height: 5px;
    margin: 0 13px 0 2px;
    border-radius: 50%;
    background: #a0a0a0;
}

.mw-head.mw-row {
    background: #fff;
    height: 26px;
    padding-top: 1px;
    border-bottom: 0;
}

.mw-head span {
    border-right-color: #e2e2e2;
}

.mw-head span:first-child {
    padding-left: 6px;
}

.mw-head svg {
    margin: 0 0 0 20px;
}

.red {
    color: #f00;
}

/* chart */
.chart-side {
    padding-top: 1px;
    border-left: 1px solid #6e6e6e;
}

.chart-window {
    position: relative;
    width: 1307px;
    height: 878px;
    padding-top: 1px;
    background: #000;
}

#chart {
    shape-rendering: crispEdges;
}

#chart text {
    font-family: "DejaVu Sans Condensed", "DejaVu Sans", sans-serif;
    font-size: 12px;
    letter-spacing: -0.100px;
    fill: #fff;
}

#chart .time {
    letter-spacing: 0.250px;
}

#chart .last-price {
    fill: #000;
}

.chart-title,
.chart-note {
    position: absolute;
    left: 10px;
    top: 6px;
    display: flex;
    color: #fff;
    font-family: "DejaVu Sans Condensed", "DejaVu Sans", sans-serif;
    font-size: 12px;
    letter-spacing: 0.100px;
}

.chart-title span {
    margin-left: 6px;
}

.chart-title i {
    font-size: 13px;
    line-height: 18px;
}

.chart-note {
    top: 21px;
    color: #ff0;
    font-family: "Liberation Sans", sans-serif;
    font-size: 13px;
    letter-spacing: 0;
}

.chart-note i {
    font-size: 14px;
    letter-spacing: 1.200px;
}

.trade-panel {
    position: absolute;
    left: 4px;
    top: 43px;
    width: 190px;
    height: 150px;
    padding: 1px 3px;
    border: 1px solid #fff;
    outline: 1px solid #b8b8b8;
    outline-offset: -2px;
    background: #efefef;
    font-family: "Noto Sans", sans-serif;
}

.tp-head {
    display: flex;
    align-items: center;
    justify-content: space-between;
    height: 22px;
    padding: 0 4px 2px 2px;
    color: #2f3347;
    font-size: 15px;
}

.tp-head svg {
    margin-top: 1px;
}

.tp-body {
    height: 123px;
    padding: 4px 0 0 4px;
    border: 1px solid #bfbfbf;
    background: #f7f7f7;
}

.tp-row {
    display: flex;
    height: 40px;
}

.tp-row.second {
    margin-top: 5px;
}

.tp-btn {
    display: flex;
    align-items: center;
    justify-content: center;
    flex: none;
    width: 49px;
    height: 39px;
    border: 1px solid #b2c3cf;
    color: #fff;
}

.tp-btn i {
    font-size: 14px;
    margin-right: 1px;
}

.sell { background: #008000; }
.buy { background: #f00; }
.cancel { width: 39px; height: 30px; margin: 10px 0 0 20px; background: #ff8c00; }

.tp-input,
.tp-price {
    flex: none;
    width: 40px;
    height: 39px;
    margin-left: 6px;
    border: 1px solid #b2c3cf;
    border-radius: 2px;
    background: #fff;
    text-align: center;
    line-height: 37px;
    font-size: 15px;
}

.tp-price {
    width: 80px;
    margin-left: 0;
}

.spin {
    display: flex;
    flex-direction: column;
    gap: 16px;
    margin: 3px 14px 0 8px;
}

.tp-p {
    display: flex;
    flex-direction: column;
    align-items: center;
    flex: none;
    width: 25px;
    padding-top: 8px;
}

.tp-p svg {
    margin-left: 9px;
}

.tp-p label {
    display: flex;
    align-items: center;
    margin: 6px 5px 0 0;
    line-height: 18px;
}

.tri-right {
    margin: 8px 0 0 5px;
}

.tp-checks {
    display: flex;
    align-items: center;
    height: 28px;
    margin-top: 4px;
}

.tp-checks label {
    display: flex;
    align-items: center;
    width: 45px;
}

.tp-checks label + label + label {
    width: 40px;
}

.tp-checks i {
    font-size: 14px;
    margin-right: 1px;
}

.tp-body u {
    display: block;
    flex: none;
    width: 13px;
    height: 13px;
    padding: 1px;
    border: 1px solid #8f8f8f;
    background: linear-gradient(135deg, #d4d4d4, #fff);
}

.c-green { color: #008000; }
.c-orange { color: #ff8c00; }
.c-red { color: #f00; }
.tp-checks .c-orange u { margin-left: 5px; }

.chart-tabs {
    display: flex;
    height: 25px;
    margin-top: 1px;
    padding-left: 2px;
    border-top: 1px solid #000;
    border-bottom: 1px solid #dcdcdc;
}

.ct {
    padding: 0 16px;
    line-height: 26px;
    letter-spacing: -0.200px;
    color: #777;
}

.ct.active {
    width: 92px;
    height: 24px;
    margin-top: -1px;
    padding: 0;
    text-align: center;
    line-height: 26px;
    background: #fff;
    border: 1px solid #000;
    border-top: 0;
    color: #111;
}

.ct-arrows {
    display: flex;
    gap: 20px;
    margin-left: auto;
    padding: 8px 15px 0 0;
}

/* status bar */
.statusbar {
    display: flex;
    height: 29px;
    padding: 4px 0 2px;
    border-top: 1px solid #fff;
}

.st-blank {
    width: 1049px;
}

.st {
    padding-left: 6px;
    border-left: 1px solid #a0a0a0;
    line-height: 23px;
}

.s165 { width: 165px; }
.s125 { width: 125px; }
.s89 { width: 89px; }
.s85 { width: 85px; }
.s87 { width: 87px; }
.s84 { width: 84px; }

.ping {
    display: flex;
    align-items: center;
    gap: 7px;
    letter-spacing: -0.150px;
}

/* taskbar */
.taskbar {
    display: flex;
    height: 50px;
    background: #1c1c1c;
    color: #fff;
}

.task {
    display: flex;
    align-items: center;
    justify-content: center;
    width: 62px;
    height: 50px;
    background: linear-gradient(#76b9ed, #76b9ed) 6px 47px / 51px 3px no-repeat;
}

.task.start {
    width: 64px;
    padding-right: 4px;
    background: none;
}

.task.current {
    width: 61px;
    background: linear-gradient(#76b9ed, #76b9ed) 0 47px / 100% 3px no-repeat #484848;
}

.tray {
    display: flex;
    align-items: center;
    margin-left: auto;
    padding-right: 31px;
}

.tray svg {
    margin-right: 11px;
}

.ime {
    width: 18px;
    margin-right: 18px;
    font: 500 17px/20px "Noto Sans CJK SC", sans-serif;
}

.pinyin {
    width: 18px;
    height: 18px;
    background: #fff;
    color: #000;
    text-align: center;
    font: 15px/18px "Noto Sans CJK SC", sans-serif;
}

.clock {
    width: 113px;
    padding-right: 2px;
    text-align: center;
    line-height: 22px;
}

.notify {
    position: relative;
}

.notify svg {
    margin: 0;
}

.notify span {
    position: absolute;
    left: 9px;
    top: 10px;
    width: 20px;
    height: 20px;
    border: 1px solid #999;
    border-radius: 50%;
    background: #333;
    text-align: center;
    font-size: 13px;
    font-weight: 600;
    line-height: 18px;
}

.tooltip {
    position: absolute;
    left: 424px;
    top: 530px;
    width: 263px;
    height: 25px;
    padding-left: 5px;
    border: 1px solid #767676;
    background: #fff;
    color: #575757;
    line-height: 24px;
    letter-spacing: 0.100px;
    box-shadow: 3px 3px 3px rgba(0, 0, 0, 0.25);
}
```
